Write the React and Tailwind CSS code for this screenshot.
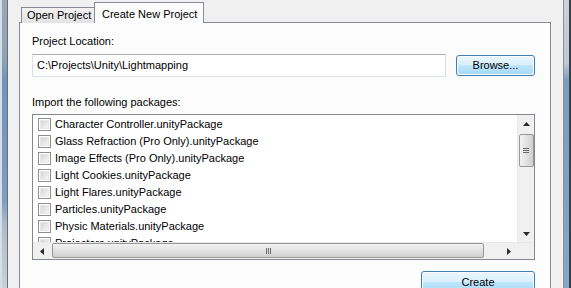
import { useState } from 'react'

const packages = [
  'Character Controller.unityPackage',
  'Glass Refraction (Pro Only).unityPackage',
  'Image Effects (Pro Only).unityPackage',
  'Light Cookies.unityPackage',
  'Light Flares.unityPackage',
  'Particles.unityPackage',
  'Physic Materials.unityPackage',
  'Projectors.unityPackage',
]

const Arrow = ({ dir }) => {
  const pts = {
    up: '0,4 3.5,0 7,4',
    down: '0,0 7,0 3.5,4',
    left: '4,0 4,7 0,3.5',
    right: '0,0 0,7 4,3.5',
  }[dir]
  const vert = dir === 'up' || dir === 'down'
  return (
    <svg width={vert ? 7 : 4} height={vert ? 4 : 7} viewBox={vert ? '0 0 7 4' : '0 0 4 7'}>
      <polygon points={pts} fill="#2b2b2b" />
    </svg>
  )
}

const Check = ({ on, onClick }) => (
  <button onClick={onClick}
    className="w-[13px] h-[13px] shrink-0 border border-[#8f8f8f] bg-white p-[1px] flex">
    <span className="flex-1 bg-gradient-to-br from-[#d6d6d6] to-[#f6f6f6] border border-[#e6e6e6] flex items-center justify-center text-[9px] leading-none">
      {on ? '✓' : ''}
    </span>
  </button>
)

const AeroButton = ({ children, className }) => (
  <button className={`rounded-[3px] border border-[#3c7fb1] p-[1px] ${className}`}>
    <span className="flex h-full w-full items-center justify-center rounded-[2px] bg-[linear-gradient(#eaf6fd_0%,#d9f0fc_45%,#bee6fd_50%,#a7d9f5_100%)]">
      {children}
    </span>
  </button>
)

export default function App() {
  const [checked, setChecked] = useState({})
  const toggle = i => setChecked(c => ({ ...c, [i]: !c[i] }))

  return (
    <div className="w-[571px] h-[288px] overflow-hidden flex bg-[#f0f0f0] text-black text-[11px]"
      style={{ fontFamily: '"Liberation Sans", Arial, sans-serif' }}>
      {/* left window frame */}
      <div className="w-[8px] shrink-0 flex">
        <div className="w-[7px] bg-[linear-gradient(#9aa8b8_0%,#8fa3b8_20%,#6f95bb_28%,#7c9fc2_70%,#aebccb_78%,#c8d1db_100%)] border-l-2 border-[#d7dee6]" />
        <div className="w-[1px] bg-[#6b6f75]" />
      </div>

      {/* dialog body */}
      <div className="flex-1 pl-[11px] pr-[12px] pt-[2px]">
        <div className="flex items-end h-[21px] -mb-[1px] relative z-10">
          <div className="ml-[2px] h-[16px] w-[74px] border border-b-0 border-[#898c95] bg-[linear-gradient(#f2f2f2,#e3e3e3)] flex items-center pl-[5px]">
            Open Project
          </div>
          <div className="h-[21px] w-[110px] -ml-[1px] border border-b-0 border-[#898c95] bg-[#fcfcfc] flex items-start pt-[3px] pl-[7px]">
            Create New Project
          </div>
        </div>

        <div className="border border-[#898c95] bg-[#fcfcfc] h-[300px] pl-[12px] pr-[15px] pt-[10px]">
          <div className="leading-[16px]">Project Location:</div>

          <div className="mt-[5px] flex items-center gap-[10px] h-[23px]">
            <div className="flex-1 h-[23px] border border-[#dbdfe6] border-t-[#abadb3] bg-white flex items-center pl-[4px]">
              C:\Projects\Unity\Lightmapping
            </div>
            <AeroButton className="w-[79px] h-[21px]">Browse...</AeroButton>
          </div>

          <div className="mt-[17px] leading-[16px]">Import the following packages:</div>

          <div className="mt-[4px] h-[146px] border border-[#828790] bg-white flex flex-col">
            <div className="flex h-[127px]">
              <div className="flex-1 overflow-hidden pt-[1px]">
                {packages.map((p, i) => (
                  <div key={p} className="h-[17px] flex items-center gap-[4px] pl-[5px] whitespace-nowrap">
                    <Check on={checked[i]} onClick={() => toggle(i)} />
                    <span>{p}</span>
                  </div>
                ))}
              </div>
              {/* vertical scrollbar */}
              <div className="w-[17px] bg-[#f0f0f0] border-l border-[#e8e8e8] flex flex-col items-center">
                <div className="h-[17px] flex items-center justify-center"><Arrow dir="up" /></div>
                <div className="mt-[2px] w-[15px] h-[33px] rounded-[2px] border border-[#979797] bg-[linear-gradient(90deg,#f2f2f2,#e2e2e2_50%,#cfcfcf)] flex flex-col items-center justify-center gap-[1px]">
                  <span className="w-[6px] h-[1px] bg-[#6a6a6a]" />
                  <span className="w-[6px] h-[1px] bg-[#6a6a6a]" />
                  <span className="w-[6px] h-[1px] bg-[#6a6a6a]" />
                </div>
                <div className="flex-1" />
                <div className="h-[17px] flex items-center justify-center"><Arrow dir="down" /></div>
              </div>
            </div>
            {/* horizontal scrollbar */}
            <div className="flex h-[17px] bg-[#f0f0f0] border-t border-[#e8e8e8]">
              <div className="w-[17px] flex items-center justify-center"><Arrow dir="left" /></div>
              <div className="ml-[2px] w-[432px] h-[15px] rounded-[2px] border border-[#979797] bg-[linear-gradient(#f2f2f2,#e2e2e2_50%,#cfcfcf)] flex items-center justify-center gap-[1px]">
                <span className="w-[1px] h-[6px] bg-[#6a6a6a]" />
                <span className="w-[1px] h-[6px] bg-[#6a6a6a]" />
                <span className="w-[1px] h-[6px] bg-[#6a6a6a]" />
              </div>
              <div className="flex-1 flex items-center justify-end pr-[6px]"><Arrow dir="right" /></div>
              <div className="w-[17px] bg-[#f0f0f0]" />
            </div>
          </div>

          <div className="mt-[11px] flex justify-end">
            <AeroButton className="w-[114px] h-[23px]">Create</AeroButton>
          </div>
        </div>
      </div>

      {/* right window frame */}
      <div className="w-[8px] shrink-0 flex">
        <div className="w-[1px] bg-[#8e9297]" />
        <div className="w-[5px] bg-[linear-gradient(#c9d2dc_0%,#bcc8d5_22%,#7a9cbf_28%,#86a6c6_100%)]" />
        <div className="w-[2px] bg-[#3a3f45]" />
      </div>
    </div>
  )
}
